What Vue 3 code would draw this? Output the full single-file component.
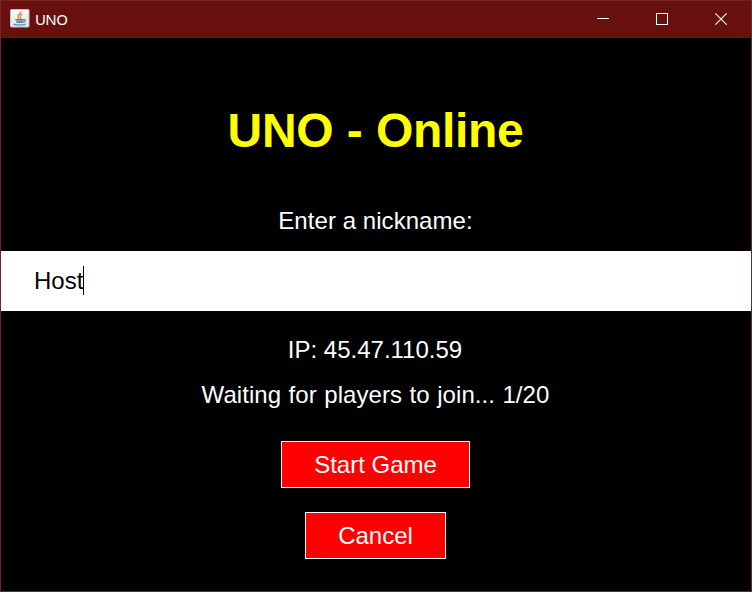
<script setup>
import { ref } from 'vue'

const nickname = ref('Host')
const ip = '45.47.110.59'
const players = ref(1)
const maxPlayers = 20
</script>

<template>
  <div class="window">
    <header class="titlebar">
      <svg class="app-icon" width="20" height="20" viewBox="0 0 20 20">
        <defs>
          <linearGradient id="tile" x1="0" y1="0" x2="0" y2="1">
            <stop offset="0" stop-color="#fcfdfd" />
            <stop offset="1" stop-color="#dce4ea" />
          </linearGradient>
        </defs>
        <rect x="0.5" y="0.5" width="18.500" height="17.500" rx="1" fill="url(#tile)" stroke="#bcc7d0" />
        <path d="M10.700 2.500c.6 2.100-2.800 2.900-2.800 4.800 0 1.100.8 1.700 1.400 2.500M12.300 5.100c-1.500.8-2.500 1.500-1.800 2.700.5.800.2 1.500-.4 2" fill="none" stroke="#e59145" stroke-width="1.600" />
        <path d="M5.500 10.500h8.300l-.8 3.300H6.700z" fill="#7d9db5" />
        <path d="M5.200 10.500h8.600M13.700 10.600c2.400-.6 2.300 2.100-.6 2.500M6.700 13.500h6.200M3.700 15c1.700 1.300 9.800 1.300 12 0" fill="none" stroke="#557f9f" stroke-width="1.100" />
      </svg>
      <span class="caption">UNO</span>
      <nav class="controls">
        <svg width="12" height="12" viewBox="0 0 12 12" shape-rendering="crispEdges">
          <path d="M0 5.500h12" stroke="#fff" />
        </svg>
        <svg width="12" height="12" viewBox="0 0 12 12" shape-rendering="crispEdges">
          <rect x="0.5" y="0.5" width="11" height="11" fill="none" stroke="#fff" />
        </svg>
        <svg width="12" height="12" viewBox="0 0 12 12">
          <path d="M.3.3l11.400 11.400M11.700.3L.3 11.700" stroke="#fff" stroke-width="1.100" />
        </svg>
      </nav>
    </header>
    <main class="lobby">
      <h1>UNO - Online</h1>
      <p class="prompt">Enter a nickname:</p>
      <div class="field"><span>{{ nickname }}</span><i class="caret"></i></div>
      <p class="ip">IP: {{ ip }}</p>
      <p class="status">Waiting for players to join... {{ players }}/{{ maxPlayers }}</p>
      <button class="start">Start Game</button>
      <button class="cancel">Cancel</button>
    </main>
  </div>
</template>

<style>
body {
  margin: 0;
  background: #000;
}
</style>

<style scoped>
.window {
  box-sizing: border-box;
  width: 752px;
  height: 592px;
  border: 1px solid #752424;
  background: #000;
  overflow: hidden;
  font-family: "Liberation Sans", Arial, sans-serif;
}
.titlebar {
  display: flex;
  align-items: flex-start;
  height: 37px;
  box-sizing: border-box;
  padding: 0 24px 0 9px;
  background: #68100e;
}
.app-icon {
  display: block;
  margin-top: 8px;
}
.caption {
  margin: 8px 0 0 5px;
  color: #fff;
  font: 15px/20px "Noto Sans", "Open Sans", sans-serif;
  letter-spacing: -0.6px;
}
.controls {
  display: flex;
  gap: 47px;
  margin: 12px 0 0 auto;
}
.controls svg {
  display: block;
}
.lobby {
  display: flex;
  flex-direction: column;
  align-items: center;
  padding-top: 66px;
  color: #fff;
  font-size: 24px;
  line-height: 27px;
}
h1 {
  margin: 0 1px 0 0;
  color: #ff0;
  font-size: 48px;
  font-weight: bold;
  line-height: 54px;
  letter-spacing: -0.33px;
  word-spacing: 0.6px;
}
p {
  margin: 0 2px 0 0;
  white-space: pre;
}
.prompt {
  margin-top: 49px;
  margin-right: 1px;
  letter-spacing: 0.06px;
}
.field {
  display: flex;
  align-items: flex-start;
  align-self: stretch;
  box-sizing: border-box;
  height: 60px;
  margin-top: 17px;
  padding: 15px 0 0 33px;
  background: #fff;
  color: #000;
}
.field span {
  margin-top: 1px;
}
.caret {
  width: 1px;
  height: 29px;
  background: #000;
}
.ip {
  margin-top: 25px;
}
.status {
  margin-top: 18px;
  margin-right: 1px;
  letter-spacing: 0.07px;
  word-spacing: 0.7px;
}
button {
  box-sizing: border-box;
  height: 47px;
  margin: 0 1px 0 0;
  padding: 0;
  border: 1px solid #fff;
  border-radius: 0;
  background: #f00;
  color: #fff;
  font: inherit;
}
.start {
  width: 189px;
  margin-top: 33px;
}
.cancel {
  width: 141px;
  margin-top: 24px;
}
</style>
